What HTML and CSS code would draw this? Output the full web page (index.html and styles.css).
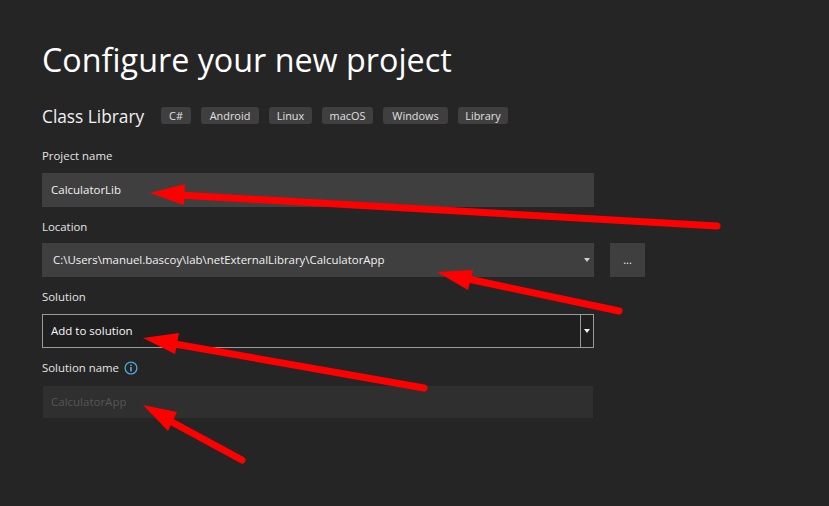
FILE: index.html
```html
<!DOCTYPE html>
<html lang="en">
<head>
<meta charset="utf-8">
<title>Configure your new project</title>
<link rel="stylesheet" href="styles.css">
</head>
<body>
<main class="page">
  <h1 class="title">Configure your new project</h1>
  <div class="template">
    <span class="template-name">Class Library</span>
    <ul class="chips">
      <li class="chip">C#</li>
      <li class="chip">Android</li>
      <li class="chip">Linux</li>
      <li class="chip">macOS</li>
      <li class="chip">Windows</li>
      <li class="chip">Library</li>
    </ul>
  </div>
  <section class="form">
    <div class="group group-roomy">
      <div class="label">Project name</div>
      <div class="field">CalculatorLib</div>
    </div>
    <div class="group">
      <div class="label">Location</div>
      <div class="row">
        <div class="field field-select">
          <span class="loc-text">C:\Users\manuel.bascoy\lab\netExternalLibrary\CalculatorApp</span>
          <svg class="caret" width="6" height="4" viewBox="0 0 6 4"><path d="M0 0H6L3 4Z"/></svg>
        </div>
        <div class="browse">...</div>
      </div>
    </div>
    <div class="group group-roomy">
      <div class="label">Solution</div>
      <div class="combo">
        <span class="combo-text">Add to solution</span>
        <span class="combo-btn"><svg class="caret caret-bright" width="6" height="4" viewBox="0 0 6 4"><path d="M0 0H6L3 4Z"/></svg></span>
      </div>
    </div>
    <div class="group group-wide">
      <div class="label label-info">Solution name
        <svg class="info" width="14" height="14" viewBox="0 0 14 14"><circle cx="7" cy="7" r="5.9" fill="none" stroke="#4fa8d8" stroke-width="1.3"/><rect x="6.3" y="6" width="1.4" height="4.4" fill="#6cc0ea"/><rect x="6.3" y="3.6" width="1.4" height="1.4" fill="#6cc0ea"/></svg>
      </div>
      <div class="field field-disabled">CalculatorApp</div>
    </div>
  </section>
</main>
<svg class="arrows" width="829" height="506" viewBox="0 0 829 506">
  <g class="arrow">
    <line x1="180" y1="195" x2="717" y2="226"/>
    <polygon points="150,193 185,184 184,205"/>
  </g>
  <g class="arrow">
    <line x1="468" y1="279" x2="619" y2="311"/>
    <polygon points="437,272 473,270 468,290"/>
  </g>
  <g class="arrow">
    <line x1="175" y1="344" x2="424" y2="388"/>
    <polygon points="143,338 179,333 175,354"/>
  </g>
  <g class="arrow">
    <line x1="170" y1="421" x2="242" y2="460"/>
    <polygon points="143,405 177,412 168,431"/>
  </g>
</svg>
</body>
</html>
```

FILE: styles.css
```css
* { box-sizing: border-box; }
html, body { margin: 0; height: 100%; }
body {
  background: #252526;
  color: #f1f1f1;
  font-family: "Open Sans", "Noto Sans", "Liberation Sans", sans-serif;
  overflow: hidden;
  position: relative;
}
.page { padding: 37px 0 0 42px; width: 829px; }
.title {
  margin: 0;
  font-weight: 400;
  font-size: 32.3px;
  line-height: 44px;
  color: #fff;
}
.template {
  display: flex;
  align-items: center;
  margin-top: 23px;
  height: 24px;
}
.template-name { font-size: 17.3px; width: 119px; color: #f1f1f1; white-space: nowrap; }
.chips {
  display: grid;
  grid-template-columns: 30px 58px 43px 51px 65px 50px;
  gap: 10px;
  list-style: none;
  margin: 0 0 2px;
  padding: 0;
}
.chip {
  background: #3f3f3f;
  border-radius: 3px;
  height: 17px;
  line-height: 17px;
  text-align: center;
  font-size: 10.9px;
  color: #e0e0e0;
}
.form { margin-top: 18px; display: flex; flex-direction: column; gap: 10px; width: 603px; }
.group { display: flex; flex-direction: column; gap: 7px; }
.group-roomy { gap: 8px; }
.group-wide { gap: 9px; }
.label { font-size: 11.4px; line-height: 19px; height: 19px; color: #e4e4e4; }
.label-info { display: flex; align-items: center; gap: 5px; }
.row { display: flex; gap: 16px; }
.field {
  background: #3f3f3f;
  height: 34px;
  width: 552px;
  line-height: 34px;
  padding-left: 9px;
  font-size: 11.5px;
  color: #f1f1f1;
}
.field-select {
  display: flex;
  align-items: center;
  justify-content: space-between;
  padding: 0 4px 0 11px;
}
.loc-text { font-size: 11.45px; white-space: nowrap; }
.caret { fill: #cfcfcf; display: block; }
.caret-bright { fill: #f1f1f1; }
.browse {
  background: #3f3f3f;
  width: 35px;
  height: 34px;
  line-height: 34px;
  text-align: center;
  font-size: 11px;
  color: #f1f1f1;
}
.combo {
  display: flex;
  align-items: stretch;
  justify-content: space-between;
  width: 552px;
  height: 34px;
  background: #1f1f1f;
  border: 1px solid #9a9a9a;
}
.combo-text { padding-left: 8px; font-size: 11.5px; line-height: 32px; color: #f8f8f8; }
.combo-btn {
  width: 13px;
  border-left: 1px solid #9a9a9a;
  display: flex;
  align-items: center;
  justify-content: center;
}
.field-disabled {
  background: #2f2f2f;
  color: #565656;
  height: 32px;
  line-height: 32px;
  width: 550px;
  margin-left: 1px;
  padding-left: 8px;
}
.arrows { position: absolute; left: 0; top: 0; pointer-events: none; }
.arrow line { stroke: #fe0000; stroke-width: 7; stroke-linecap: round; }
.arrow polygon { fill: #fe0000; }
```
